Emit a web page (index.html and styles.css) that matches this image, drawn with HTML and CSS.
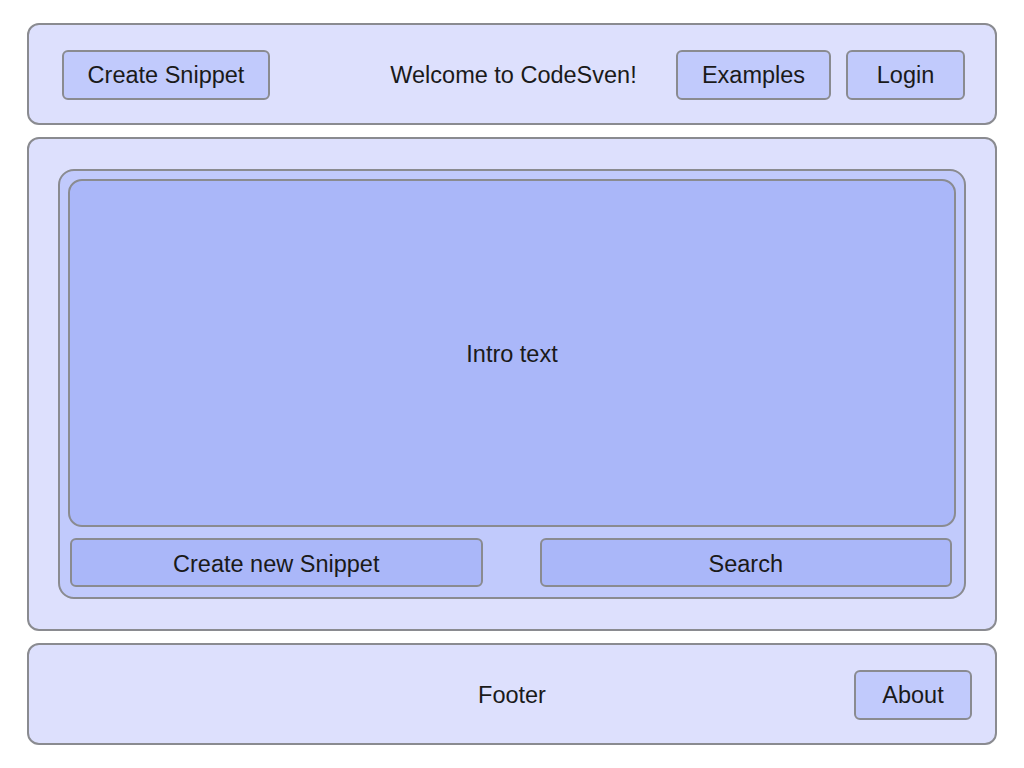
FILE: index.html
```html
<!DOCTYPE html>
<html>
<head>
<meta charset="utf-8">
<link rel="stylesheet" href="styles.css">
</head>
<body>
<div class="page">
  <header class="panel header">
    <div class="left"><button class="btn btn-nav">Create Snippet</button></div>
    <div class="title">Welcome to CodeSven!</div>
    <div class="right">
      <button class="btn btn-examples">Examples</button>
      <button class="btn btn-login">Login</button>
    </div>
  </header>
  <main class="panel main">
    <div class="inner">
      <div class="intro">Intro text</div>
      <div class="actions">
        <button class="btn btn-wide">Create new Snippet</button>
        <button class="btn btn-wide">Search</button>
      </div>
    </div>
  </main>
  <footer class="panel footer">
    <div></div>
    <div class="title">Footer</div>
    <div class="right"><button class="btn btn-about">About</button></div>
  </footer>
</div>
</body>
</html>
```

FILE: styles.css
```css
* { box-sizing: border-box; }
html, body { margin: 0; padding: 0; background: #ffffff; }
body {
  font-family: "Liberation Sans", Arial, sans-serif;
  font-size: 23.5px;
  color: #1a1a1a;
}
.page {
  padding: 23px 27px 0 27px;
  display: flex;
  flex-direction: column;
  gap: 12px;
}
.panel {
  background: #dde0fd;
  border: 2px solid #8a8b90;
  border-radius: 12px;
}
.header, .footer {
  height: 102px;
  display: grid;
  grid-template-columns: 1fr auto 1fr;
  align-items: center;
}
.header { padding: 0 30px 0 33px; }
.footer { padding: 0 23px 0 23px; }
.right { display: flex; justify-content: flex-end; gap: 15px; }
.left { display: flex; }
.title { text-align: center; margin-top: 2px; }
.btn {
  font: inherit;
  color: inherit;
  background: #c1cafc;
  border: 2px solid #8a8b90;
  border-radius: 6px;
  height: 50px;
  padding: 0;
  display: flex;
  align-items: center;
  justify-content: center;
}
.btn-nav { width: 208px; }
.btn-examples { width: 155px; }
.btn-login { width: 119px; }
.btn-about { width: 118px; }
.header .btn { margin-top: 2px; }
.footer .btn { margin-top: 2px; }
.main {
  height: 494px;
  padding: 30px 29px 30px 29px;
}
.inner {
  height: 430px;
  background: #c1cafc;
  border: 2px solid #8a8b90;
  border-radius: 16px;
  padding: 8px 8px 10px 8px;
  display: flex;
  flex-direction: column;
  gap: 11px;
}
.intro {
  height: 348px;
  padding-top: 2px;
  background: #aab7f9;
  border: 2px solid #8a8b90;
  border-radius: 14px;
  display: flex;
  align-items: center;
  justify-content: center;
}
.actions {
  display: grid;
  grid-template-columns: 1fr 1fr;
  gap: 57px;
  padding: 0 4px 0 2px;
}
.btn-wide {
  height: 49px;
  padding-top: 3px;
  background: #aab7f9;
}
```
